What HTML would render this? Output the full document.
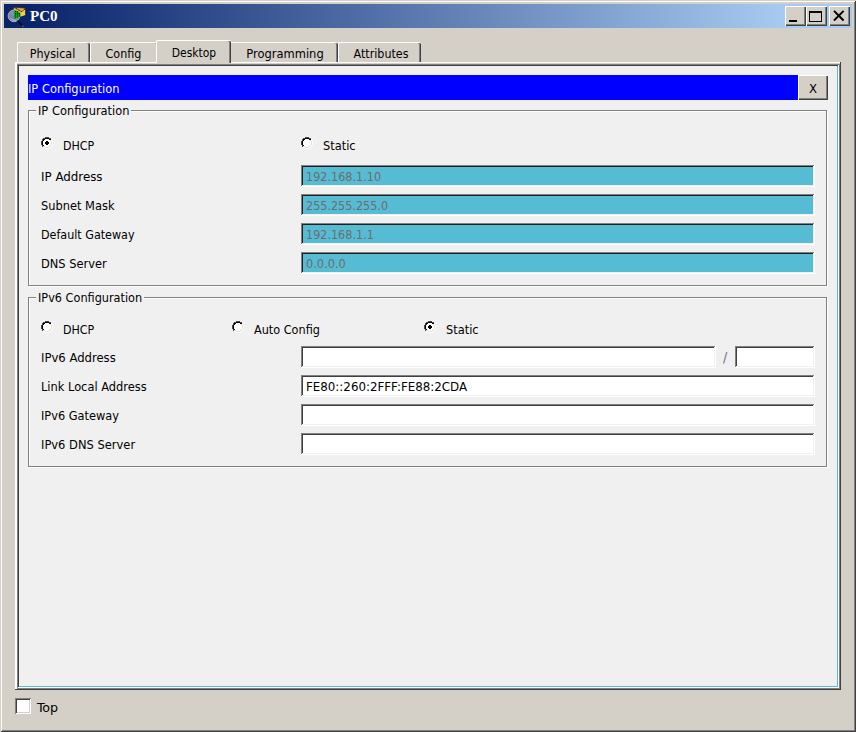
<!DOCTYPE html><html lang="en"><head><meta charset="utf-8"><title>PC0</title><style>
*{margin:0;padding:0;box-sizing:border-box}
html,body{width:856px;height:732px;overflow:hidden;background:#d4d0c8}
body{position:relative;font-family:"DejaVu Sans Condensed", "Liberation Sans", sans-serif;font-size:13px;color:#000;line-height:16px}
.a{position:absolute}
.t{position:absolute;white-space:nowrap;line-height:16px;height:16px;transform-origin:0 50%}
#win{position:absolute;left:0;top:0;width:856px;height:732px;background:#d4d0c8;
 box-shadow:inset 1px 1px 0 #d4d0c8, inset -1px -1px 0 #404040, inset 2px 2px 0 #fff, inset -2px -2px 0 #808080}
#title{left:4px;top:4px;width:848px;height:24px;background:linear-gradient(90deg,#0a246a 0,#0a246a 24px,#a6caf0 780px,#a6caf0 100%)}
#title .cap{position:absolute;left:26px;top:3px;color:#fff;font:bold 15px/18px "Liberation Serif","DejaVu Serif",serif;white-space:nowrap}
.cb{position:absolute;top:2px;width:21px;height:20px;background:#d4d0c8;
 box-shadow:inset 1px 1px 0 #fff, inset -1px -1px 0 #404040, inset -2px -2px 0 #808080}
.tab{position:absolute;top:42px;height:21px;background:#d4d0c8;border-top:1px solid #fff;border-left:1px solid #fff;
 border-top-left-radius:2px;border-top-right-radius:2px;
 box-shadow:inset -1px 0 0 #404040, inset -2px 0 0 #808080}
.tab.sel{top:40px;height:23px;z-index:3}
.tab span{position:absolute;left:0;right:0;text-align:center;white-space:nowrap}
#pane{left:15px;top:62px;width:826px;height:628px;background:#f0f0f0;z-index:1}
.in{position:absolute;height:22px;background:#fff;
 box-shadow:inset -1px -1px 0 #fff, inset 1px 1px 0 #808080, inset -2px -2px 0 #f0f0f0, inset 2px 2px 0 #404040}
.in.d{background:#55bcd4;color:#6d6d6d;box-shadow:inset -1px -1px 0 #fff, inset 1px 1px 0 #808080, inset -2px -2px 0 #f0f0f0, inset 2px 2px 0 #202020}
.in span{position:absolute;left:5px;top:4px;white-space:nowrap;line-height:16px;transform-origin:0 50%}
.gb{position:absolute;border:1px solid #808080;box-shadow:1px 1px 0 #fff, inset 1px 1px 0 #fff}
.gbt{position:absolute;background:#f0f0f0;height:16px}
.gbt span{position:absolute;left:2px;top:0;white-space:nowrap;line-height:16px;transform-origin:0 50%}
.rad{position:absolute;width:12px;height:12px}
</style></head><body>
<div id="win">
<div id="title" class="a">
<svg class="a" style="left:3px;top:3px" width="20" height="20" viewBox="0 0 20 20">
<circle cx="6.9" cy="8.9" r="5.8" fill="#7a86aa" stroke="#aab2ca" stroke-width="1"/>
<path d="M2.6 7.2 A4.6 4.6 0 0 1 6.4 4.2 L6.6 9 Z" fill="#8c96b6" opacity="0.6"/>
<path d="M3.6 11.6 Q6 14 9.4 13.2" stroke="#c4cade" stroke-width="0.8" fill="none"/>
<path d="M10.9 13.9 L15.4 18.8" stroke="#000" stroke-width="1.3" stroke-linecap="round"/>
<path d="M15.2 18.9 L16.2 19.5" stroke="#a0a0a0" stroke-width="0.8" stroke-linecap="round"/>
<path d="M6.8 0.2 L18.7 1.3 L18.7 7.7 L13.7 9.4 L6.8 5 Z" fill="#e6b64a"/>
<path d="M15 4.6 L18.7 1.6 L18.7 7.7 L13.7 9.4 Z" fill="#f2cc62"/>
<path d="M7.2 0.5 L14.8 4.6 L18.4 1.6" fill="none" stroke="#1c1202" stroke-width="1" stroke-dasharray="1.5 0.4"/>
<path d="M6.8 0.2 L18.7 1.3" fill="none" stroke="#3a2a0a" stroke-width="0.7"/><path d="M18.7 1.3 V7.7" fill="none" stroke="#140c00" stroke-width="0.9"/>
<path d="M6.8 3 L11.9 4.5 L13.5 7.3 L13.3 9.8 L7.3 11.9 Z" fill="#0cb20c"/>
<path d="M8.4 7.2 V11.2 M10.3 7.2 V10.6 M12.3 7.4 V9.9" stroke="#045a04" stroke-width="0.9" fill="none"/>
<path d="M7.9 4h1.1v1.1h-1.1z M9.8 4.1h1.1v1.1h-1.1z M7.9 5.9h1.1v1.1h-1.1z M9.8 5.9h1.1v1.1h-1.1z M11.7 6.1h1.1v1.1h-1.1z" fill="#001800"/>
</svg>
<span class="cap">PC0</span>
<div class="cb" style="left:781px"><div class="a" style="left:4px;top:14px;width:8px;height:2px;background:#000"></div></div>
<div class="cb" style="left:802px"><div class="a" style="left:3px;top:5px;width:13px;height:11px;border:1px solid #000;border-top-width:2px"></div></div>
<div class="cb" style="left:825px"><svg class="a" style="left:3px;top:3px" width="14" height="14" viewBox="0 0 14 14"><path d="M2 1.9 L11.6 11.5 M11.6 1.9 L2 11.5" stroke="#000" stroke-width="2" fill="none"/></svg></div>
</div>
<div class="tab" style="left:17px;width:73px"><span style="top:3px;transform:translateX(-1.5px) scaleX(0.9565)">Physical</span></div>
<div class="tab" style="left:90px;width:68px"><span style="top:3px;transform:translateX(-1px) scaleX(0.9568)">Config</span></div>
<div class="tab sel" style="left:156px;width:75px"><span style="top:4px;transform:translateX(0px) scaleX(0.9213)">Desktop</span></div>
<div class="tab" style="left:229px;width:109px"><span style="top:3px;transform:translateX(1px) scaleX(0.9821)">Programming</span></div>
<div class="tab" style="left:338px;width:83px"><span style="top:3px;transform:translateX(1px) scaleX(0.9517)">Attributes</span></div>
<div id="pane" class="a">
<div class="a" style="left:0px;top:0px;width:826px;height:1px;background:#fff"></div>
<div class="a" style="left:0px;top:0px;width:1px;height:628px;background:#fff"></div>
<div class="a" style="left:1px;top:1px;width:824px;height:1px;background:#d4d0c8"></div>
<div class="a" style="left:1px;top:1px;width:1px;height:626px;background:#fff"></div>
<div class="a" style="left:2px;top:2px;width:822px;height:1px;background:#808080"></div>
<div class="a" style="left:2px;top:2px;width:1px;height:624px;background:#808080"></div>
<div class="a" style="left:3px;top:3px;width:820px;height:1px;background:#404040"></div>
<div class="a" style="left:3px;top:3px;width:1px;height:622px;background:#404040"></div>
<div class="a" style="left:822px;top:4px;width:1px;height:621px;background:#55bcd4"></div>
<div class="a" style="left:823px;top:3px;width:1px;height:623px;background:#fff"></div>
<div class="a" style="left:824px;top:2px;width:1px;height:625px;background:#808080"></div>
<div class="a" style="left:825px;top:0px;width:1px;height:628px;background:#404040"></div>
<div class="a" style="left:4px;top:624px;width:819px;height:1px;background:#55bcd4"></div>
<div class="a" style="left:3px;top:625px;width:821px;height:1px;background:#fff"></div>
<div class="a" style="left:2px;top:626px;width:823px;height:1px;background:#808080"></div>
<div class="a" style="left:0px;top:627px;width:826px;height:1px;background:#404040"></div>
<div class="a" style="left:13px;top:13px;width:770px;height:25px;background:#0000ff"></div>
<div class="t" style="left:13px;top:19px;transform:scaleX(0.9784);color:#fff;">IP Configuration</div>
<div class="a" style="left:783px;top:13px;width:30px;height:25px;background:#d4d0c8;box-shadow:inset 1px 1px 0 #fff, inset -1px -1px 0 #404040, inset -2px -2px 0 #808080"><span class="t" style="left:0;width:30px;text-align:center;top:6px">X</span></div>
<div class="gb" style="left:13px;top:48px;width:799px;height:176px"></div>
<div class="gbt" style="left:21px;top:41px;width:95px"><span style="transform:scaleX(0.9784);">IP Configuration</span></div>
<svg class="rad" style="left:26px;top:75px" viewBox="0 0 12 12" shape-rendering="crispEdges"><path d="M4 2h4v1h1v1h1v4h-1v1h-1v1h-4v-1h-1v-1h-1v-4h1v-1h1z" fill="#fff"/><path d="M1 9h1v1h-1zM1 8h1v1h-1zM0 7h1v1h-1zM0 6h1v1h-1zM0 5h1v1h-1zM0 4h1v1h-1zM1 3h1v1h-1zM1 2h1v1h-1zM2 1h1v1h-1zM3 1h1v1h-1zM4 0h1v1h-1zM5 0h1v1h-1zM6 0h1v1h-1zM7 0h1v1h-1zM8 1h1v1h-1zM9 1h1v1h-1z" fill="#484848"/><path d="M2 8h1v1h-1zM1 7h1v1h-1zM1 6h1v1h-1zM1 5h1v1h-1zM1 4h1v1h-1zM2 3h1v1h-1zM2 2h1v1h-1zM3 2h1v1h-1zM4 1h1v1h-1zM5 1h1v1h-1zM6 1h1v1h-1zM7 1h1v1h-1zM8 2h1v1h-1zM9 2h1v1h-1z" fill="#000"/><path d="M2 9h1v1h-1zM3 9h1v1h-1zM4 10h1v1h-1zM5 10h1v1h-1zM6 10h1v1h-1zM7 10h1v1h-1zM8 9h1v1h-1zM9 9h1v1h-1zM9 8h1v1h-1zM10 7h1v1h-1zM10 6h1v1h-1zM10 5h1v1h-1zM10 4h1v1h-1zM9 3h1v1h-1z" fill="#e6e1d6"/><path d="M2 10h1v1h-1zM3 10h1v1h-1zM4 11h1v1h-1zM5 11h1v1h-1zM6 11h1v1h-1zM7 11h1v1h-1zM8 10h1v1h-1zM9 10h1v1h-1zM10 9h1v1h-1zM10 8h1v1h-1zM11 7h1v1h-1zM11 6h1v1h-1zM11 5h1v1h-1zM11 4h1v1h-1zM10 3h1v1h-1zM10 2h1v1h-1z" fill="#fff"/><path d="M5 4h2v1h1v2h-1v1h-2v-1h-1v-2h1z" fill="#000"/></svg>
<div class="t" style="left:48px;top:76px;transform:scaleX(0.9455);">DHCP</div>
<svg class="rad" style="left:286px;top:75px" viewBox="0 0 12 12" shape-rendering="crispEdges"><path d="M4 2h4v1h1v1h1v4h-1v1h-1v1h-4v-1h-1v-1h-1v-4h1v-1h1z" fill="#fff"/><path d="M1 9h1v1h-1zM1 8h1v1h-1zM0 7h1v1h-1zM0 6h1v1h-1zM0 5h1v1h-1zM0 4h1v1h-1zM1 3h1v1h-1zM1 2h1v1h-1zM2 1h1v1h-1zM3 1h1v1h-1zM4 0h1v1h-1zM5 0h1v1h-1zM6 0h1v1h-1zM7 0h1v1h-1zM8 1h1v1h-1zM9 1h1v1h-1z" fill="#484848"/><path d="M2 8h1v1h-1zM1 7h1v1h-1zM1 6h1v1h-1zM1 5h1v1h-1zM1 4h1v1h-1zM2 3h1v1h-1zM2 2h1v1h-1zM3 2h1v1h-1zM4 1h1v1h-1zM5 1h1v1h-1zM6 1h1v1h-1zM7 1h1v1h-1zM8 2h1v1h-1zM9 2h1v1h-1z" fill="#000"/><path d="M2 9h1v1h-1zM3 9h1v1h-1zM4 10h1v1h-1zM5 10h1v1h-1zM6 10h1v1h-1zM7 10h1v1h-1zM8 9h1v1h-1zM9 9h1v1h-1zM9 8h1v1h-1zM10 7h1v1h-1zM10 6h1v1h-1zM10 5h1v1h-1zM10 4h1v1h-1zM9 3h1v1h-1z" fill="#e6e1d6"/><path d="M2 10h1v1h-1zM3 10h1v1h-1zM4 11h1v1h-1zM5 11h1v1h-1zM6 11h1v1h-1zM7 11h1v1h-1zM8 10h1v1h-1zM9 10h1v1h-1zM10 9h1v1h-1zM10 8h1v1h-1zM11 7h1v1h-1zM11 6h1v1h-1zM11 5h1v1h-1zM11 4h1v1h-1zM10 3h1v1h-1zM10 2h1v1h-1z" fill="#fff"/></svg>
<div class="t" style="left:308px;top:76px;transform:scaleX(0.9758);">Static</div>
<div class="t" style="left:26px;top:107px;transform:scaleX(1.0131);">IP Address</div>
<div class="in d" style="left:286px;top:103px;width:514px"><span style="transform:scaleX(0.9623);">192.168.1.10</span></div>
<div class="t" style="left:26px;top:136px;transform:scaleX(0.9763);">Subnet Mask</div>
<div class="in d" style="left:286px;top:132px;width:514px"><span style="transform:scaleX(0.9588);">255.255.255.0</span></div>
<div class="t" style="left:26px;top:165px;transform:scaleX(0.9531);">Default Gateway</div>
<div class="in d" style="left:286px;top:161px;width:514px"><span style="transform:scaleX(0.9594);">192.168.1.1</span></div>
<div class="t" style="left:26px;top:194px;transform:scaleX(0.9765);">DNS Server</div>
<div class="in d" style="left:286px;top:190px;width:514px"><span style="transform:scaleX(0.9750);">0.0.0.0</span></div>
<div class="gb" style="left:13px;top:235px;width:799px;height:170px"></div>
<div class="gbt" style="left:21px;top:228px;width:108px"><span style="transform:scaleX(0.9655);">IPv6 Configuration</span></div>
<svg class="rad" style="left:26px;top:259px" viewBox="0 0 12 12" shape-rendering="crispEdges"><path d="M4 2h4v1h1v1h1v4h-1v1h-1v1h-4v-1h-1v-1h-1v-4h1v-1h1z" fill="#fff"/><path d="M1 9h1v1h-1zM1 8h1v1h-1zM0 7h1v1h-1zM0 6h1v1h-1zM0 5h1v1h-1zM0 4h1v1h-1zM1 3h1v1h-1zM1 2h1v1h-1zM2 1h1v1h-1zM3 1h1v1h-1zM4 0h1v1h-1zM5 0h1v1h-1zM6 0h1v1h-1zM7 0h1v1h-1zM8 1h1v1h-1zM9 1h1v1h-1z" fill="#484848"/><path d="M2 8h1v1h-1zM1 7h1v1h-1zM1 6h1v1h-1zM1 5h1v1h-1zM1 4h1v1h-1zM2 3h1v1h-1zM2 2h1v1h-1zM3 2h1v1h-1zM4 1h1v1h-1zM5 1h1v1h-1zM6 1h1v1h-1zM7 1h1v1h-1zM8 2h1v1h-1zM9 2h1v1h-1z" fill="#000"/><path d="M2 9h1v1h-1zM3 9h1v1h-1zM4 10h1v1h-1zM5 10h1v1h-1zM6 10h1v1h-1zM7 10h1v1h-1zM8 9h1v1h-1zM9 9h1v1h-1zM9 8h1v1h-1zM10 7h1v1h-1zM10 6h1v1h-1zM10 5h1v1h-1zM10 4h1v1h-1zM9 3h1v1h-1z" fill="#e6e1d6"/><path d="M2 10h1v1h-1zM3 10h1v1h-1zM4 11h1v1h-1zM5 11h1v1h-1zM6 11h1v1h-1zM7 11h1v1h-1zM8 10h1v1h-1zM9 10h1v1h-1zM10 9h1v1h-1zM10 8h1v1h-1zM11 7h1v1h-1zM11 6h1v1h-1zM11 5h1v1h-1zM11 4h1v1h-1zM10 3h1v1h-1zM10 2h1v1h-1z" fill="#fff"/></svg>
<div class="t" style="left:48px;top:260px;transform:scaleX(0.9455);">DHCP</div>
<svg class="rad" style="left:217px;top:259px" viewBox="0 0 12 12" shape-rendering="crispEdges"><path d="M4 2h4v1h1v1h1v4h-1v1h-1v1h-4v-1h-1v-1h-1v-4h1v-1h1z" fill="#fff"/><path d="M1 9h1v1h-1zM1 8h1v1h-1zM0 7h1v1h-1zM0 6h1v1h-1zM0 5h1v1h-1zM0 4h1v1h-1zM1 3h1v1h-1zM1 2h1v1h-1zM2 1h1v1h-1zM3 1h1v1h-1zM4 0h1v1h-1zM5 0h1v1h-1zM6 0h1v1h-1zM7 0h1v1h-1zM8 1h1v1h-1zM9 1h1v1h-1z" fill="#484848"/><path d="M2 8h1v1h-1zM1 7h1v1h-1zM1 6h1v1h-1zM1 5h1v1h-1zM1 4h1v1h-1zM2 3h1v1h-1zM2 2h1v1h-1zM3 2h1v1h-1zM4 1h1v1h-1zM5 1h1v1h-1zM6 1h1v1h-1zM7 1h1v1h-1zM8 2h1v1h-1zM9 2h1v1h-1z" fill="#000"/><path d="M2 9h1v1h-1zM3 9h1v1h-1zM4 10h1v1h-1zM5 10h1v1h-1zM6 10h1v1h-1zM7 10h1v1h-1zM8 9h1v1h-1zM9 9h1v1h-1zM9 8h1v1h-1zM10 7h1v1h-1zM10 6h1v1h-1zM10 5h1v1h-1zM10 4h1v1h-1zM9 3h1v1h-1z" fill="#e6e1d6"/><path d="M2 10h1v1h-1zM3 10h1v1h-1zM4 11h1v1h-1zM5 11h1v1h-1zM6 11h1v1h-1zM7 11h1v1h-1zM8 10h1v1h-1zM9 10h1v1h-1zM10 9h1v1h-1zM10 8h1v1h-1zM11 7h1v1h-1zM11 6h1v1h-1zM11 5h1v1h-1zM11 4h1v1h-1zM10 3h1v1h-1zM10 2h1v1h-1z" fill="#fff"/></svg>
<div class="t" style="left:239px;top:260px;transform:scaleX(0.9632);">Auto Config</div>
<svg class="rad" style="left:409px;top:259px" viewBox="0 0 12 12" shape-rendering="crispEdges"><path d="M4 2h4v1h1v1h1v4h-1v1h-1v1h-4v-1h-1v-1h-1v-4h1v-1h1z" fill="#fff"/><path d="M1 9h1v1h-1zM1 8h1v1h-1zM0 7h1v1h-1zM0 6h1v1h-1zM0 5h1v1h-1zM0 4h1v1h-1zM1 3h1v1h-1zM1 2h1v1h-1zM2 1h1v1h-1zM3 1h1v1h-1zM4 0h1v1h-1zM5 0h1v1h-1zM6 0h1v1h-1zM7 0h1v1h-1zM8 1h1v1h-1zM9 1h1v1h-1z" fill="#484848"/><path d="M2 8h1v1h-1zM1 7h1v1h-1zM1 6h1v1h-1zM1 5h1v1h-1zM1 4h1v1h-1zM2 3h1v1h-1zM2 2h1v1h-1zM3 2h1v1h-1zM4 1h1v1h-1zM5 1h1v1h-1zM6 1h1v1h-1zM7 1h1v1h-1zM8 2h1v1h-1zM9 2h1v1h-1z" fill="#000"/><path d="M2 9h1v1h-1zM3 9h1v1h-1zM4 10h1v1h-1zM5 10h1v1h-1zM6 10h1v1h-1zM7 10h1v1h-1zM8 9h1v1h-1zM9 9h1v1h-1zM9 8h1v1h-1zM10 7h1v1h-1zM10 6h1v1h-1zM10 5h1v1h-1zM10 4h1v1h-1zM9 3h1v1h-1z" fill="#e6e1d6"/><path d="M2 10h1v1h-1zM3 10h1v1h-1zM4 11h1v1h-1zM5 11h1v1h-1zM6 11h1v1h-1zM7 11h1v1h-1zM8 10h1v1h-1zM9 10h1v1h-1zM10 9h1v1h-1zM10 8h1v1h-1zM11 7h1v1h-1zM11 6h1v1h-1zM11 5h1v1h-1zM11 4h1v1h-1zM10 3h1v1h-1zM10 2h1v1h-1z" fill="#fff"/><path d="M5 4h2v1h1v2h-1v1h-2v-1h-1v-2h1z" fill="#000"/></svg>
<div class="t" style="left:431px;top:260px;transform:scaleX(0.9758);">Static</div>
<div class="t" style="left:26px;top:288px;transform:scaleX(0.9947);">IPv6 Address</div>
<div class="in" style="left:286px;top:284px;width:415px"></div>
<div class="t" style="left:708px;top:287px;color:#707070;font-size:14px;">/</div>
<div class="in" style="left:720px;top:284px;width:80px"></div>
<div class="t" style="left:26px;top:317px;transform:scaleX(0.9759);">Link Local Address</div>
<div class="in" style="left:286px;top:313px;width:514px"><span style="transform:scaleX(1.0126);">FE80::260:2FFF:FE88:2CDA</span></div>
<div class="t" style="left:26px;top:346px;transform:scaleX(0.9713);">IPv6 Gateway</div>
<div class="in" style="left:286px;top:342px;width:514px"></div>
<div class="t" style="left:26px;top:375px;transform:scaleX(0.9823);">IPv6 DNS Server</div>
<div class="in" style="left:286px;top:371px;width:514px"></div>
</div>
<div class="a" style="left:15px;top:698px;width:16px;height:16px;background:#fff;box-shadow:inset 1px 1px 0 #808080, inset -1px -1px 0 #fff, inset 2px 2px 0 #404040, inset -2px -2px 0 #d4d0c8"></div>
<div class="t" style="left:37px;top:700px;transform:scaleX(1.0850)">Top</div>
</div></body></html>
